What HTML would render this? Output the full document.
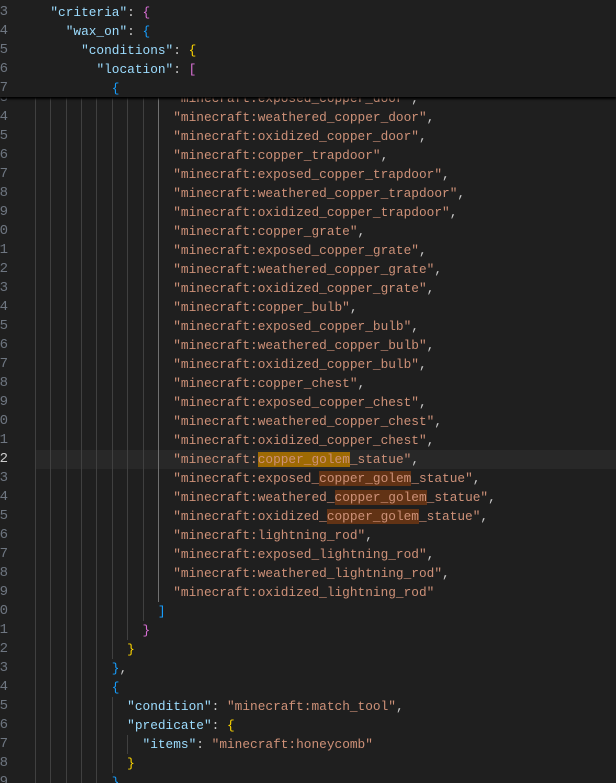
<!DOCTYPE html>
<html><head><meta charset="utf-8"><style>
html,body{margin:0;padding:0;background:#1f1f1f;width:616px;height:783px;overflow:hidden}
body{position:relative;font-family:"Liberation Mono",monospace;font-size:12.8px}
.row{position:absolute;left:0;width:616px;height:19px;line-height:19px;white-space:pre}
.ln{position:absolute;left:-2px;width:10px;text-align:right;color:#6e7681;font-size:14px}
.code{position:absolute;left:35px;color:#cccccc}
.gl{position:absolute;top:0;width:1px;height:19px;background:#404040}
.k{color:#9cdcfe}.s{color:#ce9178}.p{color:#cccccc}
.b1{color:#da70d6}.b2{color:#179fff}.b3{color:#ffd700}
.sel{background:#9e6a03}.hl{background:#623315}
#sticky{position:absolute;left:0;top:0;width:616px;height:97px;background:#1f1f1f;box-shadow:0 2px 2px #000;z-index:5}
</style></head><body>
<div id="main">
</div>
<div id="sticky">
<div class="row" style="top:3px"><span class="ln">3</span><span class="code">  <span class="k">"criteria"</span>: <span class="b1">{</span></span></div>
<div class="row" style="top:22px"><span class="ln">4</span><span class="code">    <span class="k">"wax_on"</span>: <span class="b2">{</span></span></div>
<div class="row" style="top:41px"><span class="ln">5</span><span class="code">      <span class="k">"conditions"</span>: <span class="b3">{</span></span></div>
<div class="row" style="top:60px"><span class="ln">6</span><span class="code">        <span class="k">"location"</span>: <span class="b1">[</span></span></div>
<div class="row" style="top:79px"><span class="ln">7</span><span class="code">          <span class="b2">{</span></span></div>
</div>
<script>
var items=["exposed_copper_door","weathered_copper_door","oxidized_copper_door","copper_trapdoor","exposed_copper_trapdoor","weathered_copper_trapdoor","oxidized_copper_trapdoor","copper_grate","exposed_copper_grate","weathered_copper_grate","oxidized_copper_grate","copper_bulb","exposed_copper_bulb","weathered_copper_bulb","oxidized_copper_bulb","copper_chest","exposed_copper_chest","weathered_copper_chest","oxidized_copper_chest","copper_golem_statue","exposed_copper_golem_statue","weathered_copper_golem_statue","oxidized_copper_golem_statue","lightning_rod","exposed_lightning_rod","weathered_lightning_rod","oxidized_lightning_rod"];
var h="";var sp=function(n){return " ".repeat(n)};
function row(i,indent,html,cls){var top=89+19*i;var num=(3+i)%10;
 var g='';for(var k=0;k<indent/2;k++){g+='<span class="gl" style="left:'+Math.round(35+15.36*k)+'px"></span>';}
 h+='<div class="row" style="top:'+top+'px">'+(cls?'<span style="position:absolute;left:35px;right:0;top:0;bottom:0;background:#282828"></span>':'')+'<span class="ln" style="'+(cls?'color:#cccccc':'')+'">'+num+'</span>'+g+'<span class="code">'+sp(indent)+html+'</span></div>';}
items.forEach(function(it,i){
 var t=it;var comma=(i<items.length-1)?'<span class="p">,</span>':'';
 if(it.indexOf("copper_golem")>=0){var idx=it.indexOf("copper_golem");
  var c=(it=="copper_golem_statue")?"sel":"hl";
  t=it.slice(0,idx)+'<span class="'+c+'">copper_golem</span>'+it.slice(idx+12);}
 row(i,18,'<span class="s">"minecraft:'+t+'"</span>'+comma,it=="copper_golem_statue"?"cur":"");
});
var n=items.length;
row(n,16,'<span class="b2">]</span>');
row(n+1,14,'<span class="b1">}</span>');
row(n+2,12,'<span class="b3">}</span>');
row(n+3,10,'<span class="b2">}</span><span class="p">,</span>');
row(n+4,10,'<span class="b2">{</span>');
row(n+5,12,'<span class="k">"condition"</span>: <span class="s">"minecraft:match_tool"</span>,');
row(n+6,12,'<span class="k">"predicate"</span>: <span class="b3">{</span>');
row(n+7,14,'<span class="k">"items"</span>: <span class="s">"minecraft:honeycomb"</span>');
row(n+8,12,'<span class="b3">}</span>');
row(n+9,10,'<span class="b2">}</span>');
document.getElementById("main").innerHTML=h;
var act=document.createElement("div");
act.style.cssText="position:absolute;left:158px;top:97px;width:1px;height:"+(89+19*n-97)+"px;background:#707070";
document.body.appendChild(act);
</script>
</body></html>
